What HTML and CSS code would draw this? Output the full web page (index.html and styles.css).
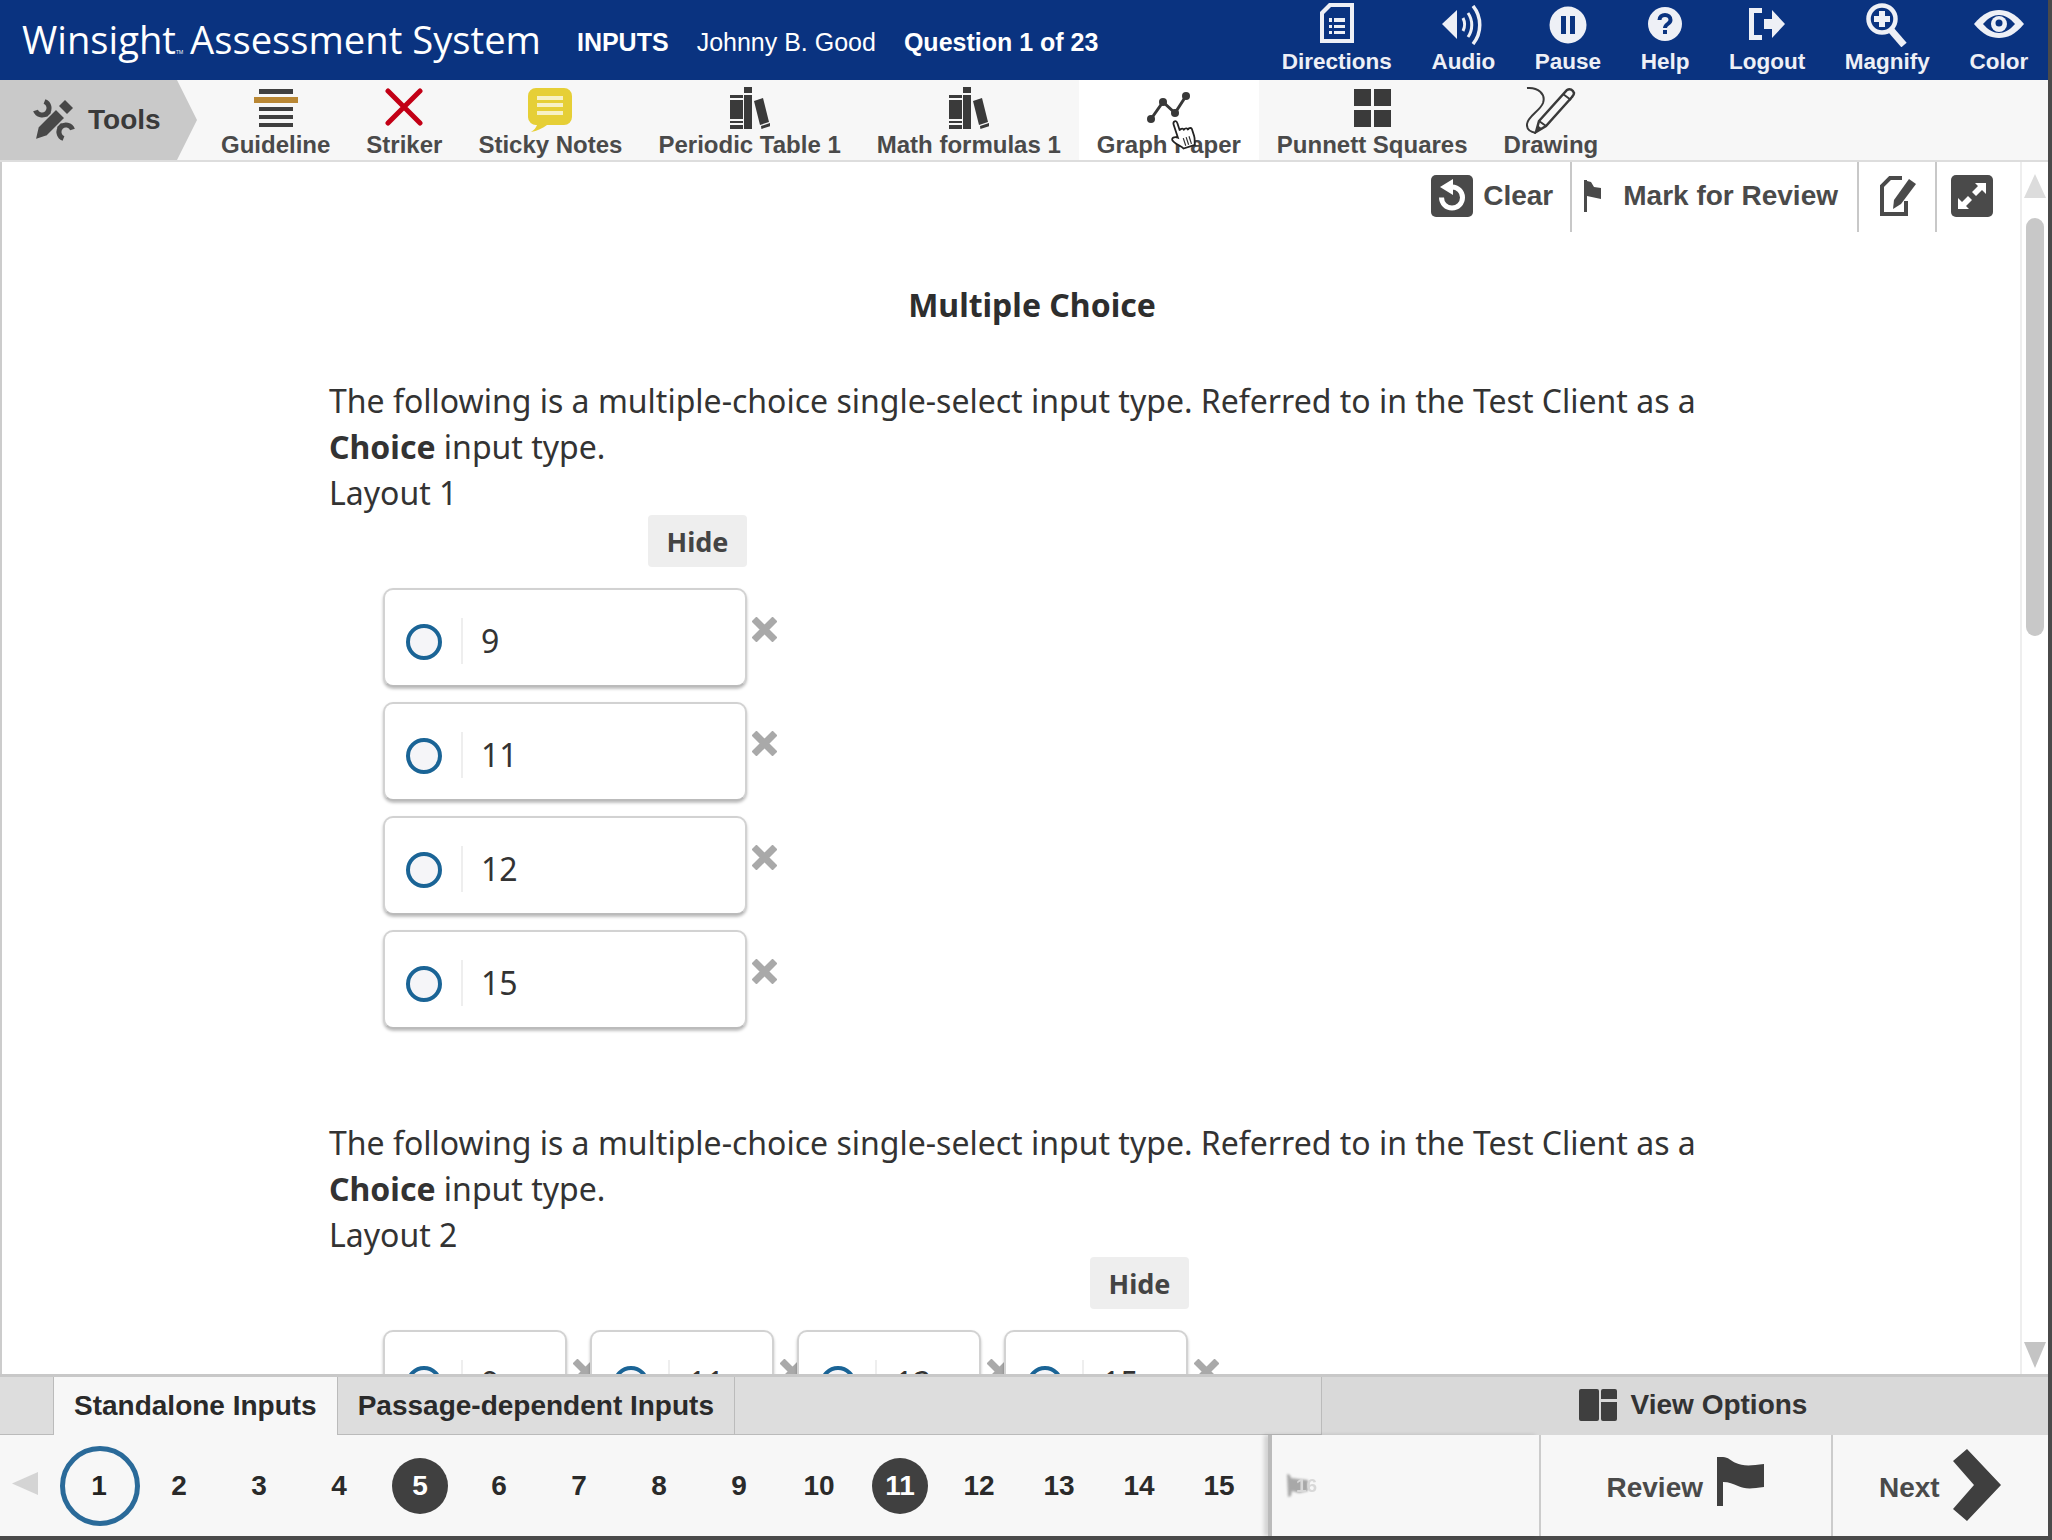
FILE: index.html
```html
<!DOCTYPE html>
<html lang="en">
<head>
<meta charset="utf-8">
<title>Winsight Assessment System</title>
<link rel="stylesheet" href="styles.css">
</head>
<body>
<div class="app">
  <header class="topbar">
    <div class="brand">Winsight<span class="tm">TM</span> Assessment System</div>
    <div class="meta"><b>INPUTS</b><span>Johnny B. Good</span><b>Question 1 of 23</b></div>
    <nav class="top-actions">
      <div class="top-action"><svg class="ti ti-dir" width="34" height="40" viewBox="0 0 34 40"><path fill="#eef0f6" d="M9 0h25v40H0V9z"/><path fill="#0a3380" d="M4 11 11 4h19v32H4z"/><path fill="#eef0f6" d="M9 15h3v4H9zM14 15h11v4H14zM9 22h3v3H9zM14 22h11v3H14zM9 28h3v3H9zM14 28h11v3H14z"/></svg><span>Directions</span></div>
      <div class="top-action"><svg class="ti ti-aud" width="42" height="40" viewBox="0 0 42 40"><path fill="#eef0f6" d="M0 19 15 5v29z"/><path fill="none" stroke="#eef0f6" stroke-width="3" d="M21 13c2 4 2 9 0 13M26 8c5 7 5 17 0 24"/><path fill="none" stroke="#eef0f6" stroke-width="3.500" d="M31 1c9 11 9 27 0 38"/></svg><span>Audio</span></div>
      <div class="top-action"><svg class="ti ti-pause" width="38" height="38" viewBox="0 0 38 38"><circle cx="19" cy="19" r="18.500" fill="#eef0f6"/><path fill="#0a3380" d="M12 10h5v18h-5zM21 10h5v18h-5z"/></svg><span>Pause</span></div>
      <div class="top-action"><svg class="ti ti-help" width="34" height="34" viewBox="0 0 34 34"><circle cx="17" cy="17" r="17" fill="#eef0f6"/><path fill="none" stroke="#0a3380" stroke-width="4" d="M11.500 13c0-3 2.500-5 5.500-5s5.500 2 5.500 5c0 4-5.500 4-5.500 8"/><path fill="#0a3380" d="M15 23h4v4h-4z"/></svg><span>Help</span></div>
      <div class="top-action"><svg class="ti ti-log" width="36" height="32" viewBox="0 0 36 32"><path fill="none" stroke="#eef0f6" stroke-width="5" d="M13 2.500H2.500v27H13"/><path fill="#eef0f6" d="M15 11h8V2l13 14-13 14v-9h-8z"/></svg><span>Logout</span></div>
      <div class="top-action"><svg class="ti ti-mag" width="42" height="44" viewBox="0 0 42 44"><circle cx="16" cy="16" r="13.500" fill="none" stroke="#eef0f6" stroke-width="4.500"/><path fill="#eef0f6" d="M13 8h6v5h5v6h-5v5h-6v-5H8v-6h5z"/><path stroke="#eef0f6" stroke-width="7" d="M25 27l13 15"/></svg><span>Magnify</span></div>
      <div class="top-action"><svg class="ti ti-col" width="50" height="28" viewBox="0 0 50 28"><path fill="#eef0f6" d="M0 14C9 3 17 0 25 0s16 3 25 14C41 25 33 28 25 28S9 25 0 14z"/><path fill="#0a3380" d="M9 14c5-6 11-9 16-9s11 3 16 9c-5 6-11 9-16 9S14 20 9 14z"/><circle cx="25" cy="14" r="8" fill="#eef0f6"/><circle cx="25" cy="13" r="3.500" fill="#0a3380"/></svg><span>Color</span></div>
    </nav>
  </header>

  <div class="toolbar">
    <div class="tools-tab">
      <svg width="42" height="42" viewBox="0 0 42 42"><g fill="none" stroke="#484848"><path stroke-width="5" d="M2.500 11.500A7 7 0 1 0 11.500 2.500"/><path stroke-width="5" d="M39.500 30.500A7 7 0 1 0 30.500 39.500"/><path stroke-width="6" d="M13 13l16 16"/></g><path fill="#484848" stroke="#c9c9c9" stroke-width="1.500" d="m2 41 3-13L23 10l9 9-18 18z"/><path fill="#484848" d="m26 7 6-6 8 8-6 6z"/></svg>
      <span>Tools</span>
    </div>
    <div class="tool">
      <svg class="i-8" width="44" height="40" viewBox="0 0 44 40"><path fill="#3f3f3f" d="M5 1h34v5H5zM5 19h34v4H5zM5 27h34v4H5zM5 35h34v4H5z"/><path fill="#b98734" d="M0 9h44v6H0z"/></svg>
      <span>Guideline</span>
    </div>
    <div class="tool">
      <svg class="i-8" width="38" height="38" viewBox="0 0 38 38"><path fill="none" stroke="#c30016" stroke-width="5" stroke-linecap="round" d="M3 3l32 32M35 3 3 35"/></svg>
      <span>Striker</span>
    </div>
    <div class="tool">
      <svg class="i-8" width="44" height="44" viewBox="0 0 44 44"><path fill="#e6cf36" d="M8 0h28a8 8 0 0 1 8 8v21a8 8 0 0 1-8 8H19c-4 3-10 6-16 7 3-2 5-4 6-7a8 8 0 0 1-9-8V8a8 8 0 0 1 8-8z"/><path fill="#f7f1c4" d="M9 8h26v4H9zM9 15h26v4H9zM9 23h26v4H9z"/></svg>
      <span>Sticky Notes</span>
    </div>
    <div class="tool">
      <svg class="i-7" width="40" height="42" viewBox="0 0 40 42"><g fill="#3a3a3a"><path d="M0 8h13v3H0zM0 13h13v19H0zM0 34h13v2H0zM0 38h13v4H0zM14 0h8v6h-8zM14 8h8v34h-8z"/><path d="m24 14 9-3 6 24-9 3zM31 39l9-3 .4 3-9 3z"/></g></svg>
      <span>Periodic Table 1</span>
    </div>
    <div class="tool">
      <svg class="i-7" width="40" height="42" viewBox="0 0 40 42"><g fill="#3a3a3a"><path d="M0 8h13v3H0zM0 13h13v19H0zM0 34h13v2H0zM0 38h13v4H0zM14 0h8v6h-8zM14 8h8v34h-8z"/><path d="m24 14 9-3 6 24-9 3zM31 39l9-3 .4 3-9 3z"/></g></svg>
      <span>Math formulas 1</span>
    </div>
    <div class="tool tool-hover">
      <svg class="i-12" width="44" height="32" viewBox="0 0 44 32"><path fill="none" stroke="#383838" stroke-width="3" d="M4 27 16 10l12 11L39 4"/><circle cx="4" cy="27" r="4" fill="#383838"/><circle cx="16" cy="10" r="4" fill="#383838"/><circle cx="28" cy="21" r="4" fill="#383838"/><circle cx="39" cy="4" r="4" fill="#383838"/></svg>
      <span>Graph Paper</span>
      <svg class="hand" width="32" height="32" viewBox="0 0 32 32"><g transform="rotate(-18 16 16)"><path fill="#fff" stroke="#222" stroke-width="1.800" d="M10 17V4c0-3.500 4-3.500 4 0v8c0-2 4-2 4 0v1c0-2 4-2 4 0v1c0-2 4-2 4 0v7c0 4-1.500 5-2 9H12c-1-3-7-7-8-11-.5-3 3-3.500 6-1z"/><path stroke="#333" stroke-width="1.200" d="M15 20v8M18 20v8M21 20v8"/></g></svg>
    </div>
    <div class="tool">
      <svg class="i-9" width="37" height="38" viewBox="0 0 37 38"><path fill="#3a3a3a" d="M0 0h17v17H0zM20 0h17v17H20zM0 21h17v17H0zM20 21h17v17H20z"/></svg>
      <span>Punnett Squares</span>
    </div>
    <div class="tool">
      <svg class="i-6" width="50" height="48" viewBox="0 0 50 48"><path fill="none" stroke="#3a3a3a" stroke-width="2" d="M1 2C12 1 20 8 17 17 14 25 2 30 1 38c-.5 5 3 8 9 9"/><path fill="#f7f7f7" stroke="#3a3a3a" stroke-width="2.500" d="m41 4 c3-2 6 0 7 3 0 2-1 3-2 4L20 40l-10 6 3-11z"/><path fill="#3a3a3a" d="m10 46 1.500-7 5 4z"/><path stroke="#3a3a3a" stroke-width="2" d="m13 35 7 5M37 8l8 6"/></svg>
      <span>Drawing</span>
    </div>
  </div>

  <div class="workspace">
    <main class="pane">
      <div class="actions">
        <div class="action action-clear">
          <svg width="42" height="42" viewBox="0 0 42 42"><rect width="42" height="42" rx="5" fill="#4a4a4a"/><path fill="none" stroke="#fff" stroke-width="5" d="M21 12a10.500 10.500 0 1 1-10.500 10.500"/><path fill="#fff" d="M22 4v16L9 12z"/></svg>
          <span>Clear</span>
        </div>
        <div class="action action-mark">
          <svg width="18" height="32" viewBox="0 0 18 32"><path fill="#4a4a4a" d="M0 0h3v32H0z"/><path fill="#4a4a4a" d="M3 1l4 1 3 5 7 1v11L3 16z"/></svg>
          <span>Mark for Review</span>
        </div>
        <div class="action action-note">
          <svg width="36" height="40" viewBox="0 0 36 40"><path fill="none" stroke="#4a4a4a" stroke-width="4" d="M26 25v13H2V10l8-8h12"/><path fill="#4a4a4a" d="M29 3l7 5-15 20-8 5 1-9z"/></svg>
        </div>
        <div class="action action-expand">
          <svg width="42" height="42" viewBox="0 0 42 42"><rect width="42" height="42" rx="5" fill="#4a4a4a"/><path fill="#fff" d="M24 8h11v11l-4-4-6 6-4-4 6-6zM18 34H7V23l4 4 6-6 4 4-6 6z"/></svg>
        </div>
      </div>

      <h1 class="title">Multiple Choice</h1>

      <section class="question">
        <p>The following is a multiple-choice single-select input type. Referred to in the Test Client as a <b>Choice</b> input type.<br>Layout 1</p>
        <div class="choice-block">
          <button class="hide">Hide</button>
          <div class="choices-v">
            <div class="row"><div class="choice"><i class="radio"></i><span>9</span></div><svg class="elim" width="25" height="25" viewBox="0 0 25 25"><path stroke="#a9a9a9" stroke-width="7" d="M2 2l21 21M23 2 2 23"/></svg></div>
            <div class="row"><div class="choice"><i class="radio"></i><span>11</span></div><svg class="elim" width="25" height="25" viewBox="0 0 25 25"><path stroke="#a9a9a9" stroke-width="7" d="M2 2l21 21M23 2 2 23"/></svg></div>
            <div class="row"><div class="choice"><i class="radio"></i><span>12</span></div><svg class="elim" width="25" height="25" viewBox="0 0 25 25"><path stroke="#a9a9a9" stroke-width="7" d="M2 2l21 21M23 2 2 23"/></svg></div>
            <div class="row"><div class="choice"><i class="radio"></i><span>15</span></div><svg class="elim" width="25" height="25" viewBox="0 0 25 25"><path stroke="#a9a9a9" stroke-width="7" d="M2 2l21 21M23 2 2 23"/></svg></div>
          </div>
        </div>
      </section>

      <section class="question q2">
        <p>The following is a multiple-choice single-select input type. Referred to in the Test Client as a <b>Choice</b> input type.<br>Layout 2</p>
        <div class="choice-block block-h">
          <button class="hide">Hide</button>
          <div class="choices-h">
            <div class="row"><div class="choice"><i class="radio"></i><span>9</span></div><svg class="elim" width="25" height="25" viewBox="0 0 25 25"><path stroke="#a9a9a9" stroke-width="7" d="M2 2l21 21M23 2 2 23"/></svg></div>
            <div class="row"><div class="choice"><i class="radio"></i><span>11</span></div><svg class="elim" width="25" height="25" viewBox="0 0 25 25"><path stroke="#a9a9a9" stroke-width="7" d="M2 2l21 21M23 2 2 23"/></svg></div>
            <div class="row"><div class="choice"><i class="radio"></i><span>12</span></div><svg class="elim" width="25" height="25" viewBox="0 0 25 25"><path stroke="#a9a9a9" stroke-width="7" d="M2 2l21 21M23 2 2 23"/></svg></div>
            <div class="row"><div class="choice"><i class="radio"></i><span>15</span></div><svg class="elim" width="25" height="25" viewBox="0 0 25 25"><path stroke="#a9a9a9" stroke-width="7" d="M2 2l21 21M23 2 2 23"/></svg></div>
          </div>
        </div>
      </section>
    </main>
    <div class="scroll">
      <svg width="22" height="24" viewBox="0 0 22 24"><path fill="#dcdcdc" d="M11 0 22 24H0z"/></svg>
      <div class="thumb"></div>
      <svg class="scroll-down" width="22" height="26" viewBox="0 0 22 26"><path fill="#c4c4c4" d="M0 0h22L11 26z"/></svg>
    </div>
  </div>

  <div class="tabbar">
    <div class="tabs">
      <div class="tab tab-on">Standalone Inputs</div>
      <div class="tab">Passage-dependent Inputs</div>
    </div>
    <div class="view-options">
      <svg width="38" height="32" viewBox="0 0 38 32"><path fill="#3f3f3f" d="M2 0h16a2 2 0 0 1 2 2v28a2 2 0 0 1-2 2H2a2 2 0 0 1-2-2V2a2 2 0 0 1 2-2zM24 0h12a2 2 0 0 1 2 2v8H22V2a2 2 0 0 1 2-2zM22 13h16v17a2 2 0 0 1-2 2H24a2 2 0 0 1-2-2z"/></svg>
      <span>View Options</span>
    </div>
  </div>

  <footer class="navbar">
    <svg class="prev" width="26" height="23" viewBox="0 0 26 23"><path fill="#d4d4d4" d="M26 0v23L0 11.500z"/></svg>
    <div class="pages">
      <div class="page page-current">1</div><div class="page">2</div><div class="page">3</div><div class="page">4</div><div class="page page-dark">5</div><div class="page">6</div><div class="page">7</div><div class="page">8</div><div class="page">9</div><div class="page">10</div><div class="page page-dark">11</div><div class="page">12</div><div class="page">13</div><div class="page">14</div><div class="page">15</div>
    </div>
    <div class="more"><svg class="more-flag" width="24" height="23" viewBox="0 0 24 23"><path fill="#a8a8a8" d="M1 0l3 1 1 3 8 1 9 1v11l-9 2-7-2-1 5-3 1z"/></svg><span class="more-num">16</span></div>
    <div class="nav-btn nav-review"><span>Review</span><svg class="review-flag" width="47" height="49" viewBox="0 0 47 49"><path fill="#3f3f3f" d="M0 0h6v49H0z"/><path fill="#3f3f3f" d="M6 0c5 0 8 4 13 6 6 3 14 3 28 1v23c-13 2-20 2-26-1-5-2-9-4-15-4z"/></svg></div>
    <div class="nav-btn nav-next"><span>Next</span><svg class="next-arrow" width="48" height="72" viewBox="0 0 48 72"><path fill="#3f3f3f" d="M14 0 48 36 14 72 0 60 21 36 0 12z"/></svg></div>
  </footer>
</div>
</body>
</html>
```

FILE: styles.css
```css
* { box-sizing: border-box; }
html, body { margin: 0; padding: 0; background: #fff; }
body { font-family: "Liberation Sans", Arial, sans-serif; }
.app { width: 2052px; height: 1540px; display: flex; flex-direction: column; overflow: hidden; background: #4a4a4a; }

.topbar { height: 80px; flex: none; background: #0a3380; color: #fff; display: flex; align-items: center; padding-left: 22px; margin-right: 4px; }
.brand { font-family: "Open Sans", sans-serif; font-size: 38.200px; white-space: nowrap; padding-bottom: 2px; }
.tm { font-size: 5px; margin-right: -3px; }
.meta { display: flex; gap: 28px; margin-left: 36px; margin-top: 4px; font-size: 25px; white-space: nowrap; }
.top-actions { margin-left: auto; display: flex; height: 100%; }
.top-action { display: flex; flex-direction: column; align-items: center; padding: 0 19.800px 4px; font-size: 22.500px; font-weight: bold; color: #eef0f6; }
.top-action span { line-height: 28px; margin-top: auto; }
.ti { flex: none; }
.ti-dir { margin-top: 3px; }
.ti-aud { margin-top: 5px; }
.ti-pause { margin-top: 6px; }
.ti-help { margin-top: 7px; }
.ti-log { margin-top: 8px; }
.ti-mag { margin-top: 3px; }
.ti-col { margin-top: 10px; }

.toolbar { height: 82px; flex: none; display: flex; background: #f7f7f7; border-bottom: 2px solid #ddd; margin-right: 4px; }
.tools-tab { width: 197px; flex: none; background: #c9c9c9; clip-path: polygon(0 0, 177px 0, 197px 50%, 177px 100%, 0 100%); display: flex; align-items: center; gap: 13px; padding-left: 33px; font-size: 28px; font-weight: bold; color: #3a3a3a; margin-right: 6px; }
.tool { position: relative; display: flex; flex-direction: column; align-items: center; padding: 0 18px; font-size: 24px; font-weight: bold; color: #4a4a4a; white-space: nowrap; }
.tool span { line-height: 30px; margin-top: auto; }
.tool svg { flex: none; margin-bottom: -12px; }
.i-6 { margin-top: 6px; }
.i-7 { margin-top: 7px; }
.i-8 { margin-top: 8px; }
.i-9 { margin-top: 9px; }
.i-12 { margin-top: 12px; }
.tool-hover { background: #fff; }
.tool .hand { position: absolute; left: 88px; top: 38px; margin: 0; }

.workspace { height: 1212px; flex: none; display: flex; background: #fff; overflow: hidden; margin-right: 4px; }
.pane { flex: 1; border-left: 2px solid #ccc; overflow: hidden; font-family: "Noto Sans", sans-serif; color: #333; }
.actions { display: flex; justify-content: flex-end; height: 70px; }
.action { display: flex; align-items: center; border-left: 2px solid #c8c8c8; font-family: "Liberation Sans", sans-serif; font-size: 28px; font-weight: bold; color: #4a4a4a; padding-bottom: 2px; }
.action-clear { border-left: 0; gap: 10px; padding-right: 17px; }
.action-mark { gap: 21px; padding-left: 12px; padding-right: 19px; }
.action-note { width: 78px; padding-left: 21px; }
.action-expand { width: 85px; padding-left: 14px; }

.title { margin: 51px 0 0; padding-left: 42px; font-size: 32px; line-height: 44px; text-align: center; font-weight: bold; color: #2e2e2e; }
.question { padding-left: 327px; width: 1720px; margin-top: 51px; }
.question.q2 { margin-top: 91px; }
.question p { margin: 0; font-size: 32px; line-height: 46px; }
.choice-block { width: 364px; margin-left: 54px; }
.hide { display: block; margin: -1px 0 21px auto; width: 99px; height: 52px; border: 0; border-radius: 4px; background: #eee; font: bold 27px "Noto Sans", sans-serif; color: #444; padding: 0; }
.block-h { width: 806px; }
.choices-v { display: flex; flex-direction: column; gap: 15px; }
.choices-h { display: grid; grid-template-columns: repeat(4, 184px); column-gap: 23px; }
.row { position: relative; }
.choice { height: 99px; display: flex; align-items: center; border: 2px solid #d2d2d2; border-bottom-color: #bbb; border-radius: 10px; background: #fff; box-shadow: 0 2px 3px rgba(0,0,0,.25); padding-left: 21px; padding-top: 6px; font-size: 32px; color: #333; }
.radio { display: block; flex: none; width: 36px; height: 36px; margin-top: 2px; border: 4px solid #1a6496; border-radius: 50%; background: #f5f5f8; margin-right: 19px; }
.choice span { height: 46px; line-height: 46px; border-left: 2px solid #eee; padding-left: 18px; }
.elim { position: absolute; left: 369px; top: 29px; }
.choices-h .elim { left: 190px; }

.scroll { width: 28px; flex: none; display: flex; flex-direction: column; align-items: center; padding: 12px 0 6px; background: #fff; border-left: 2px solid #eee; }
.thumb { width: 18px; height: 418px; margin-top: 20px; border-radius: 9px; background: #c8c8c8; }
.scroll-down { margin-top: auto; }

.tabbar { height: 61px; flex: none; display: flex; background: #ddd; border-top: 3px solid #c8c8c8; margin-right: 4px; }
.tabs { flex: 1; display: flex; padding-left: 53px; border-bottom: 1px solid #bbb; }
.tab { display: flex; align-items: center; padding: 0 20px; font-size: 28px; font-weight: bold; color: #2a2a2a; border-right: 1px solid #bbb; white-space: nowrap; }
.tab-on { background: #f7f7f7; border-left: 1px solid #bbb; margin-bottom: -1px; }
.view-options { width: 727px; flex: none; display: flex; align-items: center; justify-content: center; gap: 14px; padding-left: 16px; padding-bottom: 2px; background: #d9d9d9; border-left: 1px solid #bbb; font-size: 28px; font-weight: bold; color: #333; }

.navbar { height: 101px; flex: none; display: flex; align-items: center; background: #f7f7f7; margin-right: 4px; }
.prev { margin-left: 12px; flex: none; position: relative; top: -2px; }
.pages { display: flex; align-items: center; width: 1230px; height: 100%; padding-left: 22px; padding-top: 1px; }
.page { width: 80px; height: 56px; flex: none; display: flex; align-items: center; justify-content: center; padding-right: 2px; font-size: 28px; font-weight: bold; color: #2a2a2a; }
.page-current { height: 80px; border: 5px solid #2a6a99; border-radius: 50%; color: #222; }
.page-dark { width: 56px; margin: 0 12px; border-radius: 50%; background: #404040; color: #fff; padding-right: 0; }
.more { width: 271px; height: 100%; flex: none; display: flex; align-items: center; padding-left: 14px; border-left: 4px solid #bbb; box-shadow: -4px 0 4px rgba(0,0,0,.15); position: relative; }
.more-flag { filter: blur(1px); }
.more-num { position: absolute; left: 24px; font-size: 19px; font-weight: bold; color: #d8d8d8; filter: blur(.6px); }
.nav-btn { height: 100%; flex: none; display: flex; align-items: center; border-left: 2px solid #ccc; font-size: 28px; font-weight: bold; color: #4a4a4a; }
.nav-btn span { padding-top: 5px; }
.nav-review { width: 292px; justify-content: flex-end; gap: 14px; padding-right: 67px; }
.review-flag { margin-top: -9px; }
.nav-next { flex: 1; gap: 13px; padding-left: 46px; }
.next-arrow { margin-top: -1px; }
```
